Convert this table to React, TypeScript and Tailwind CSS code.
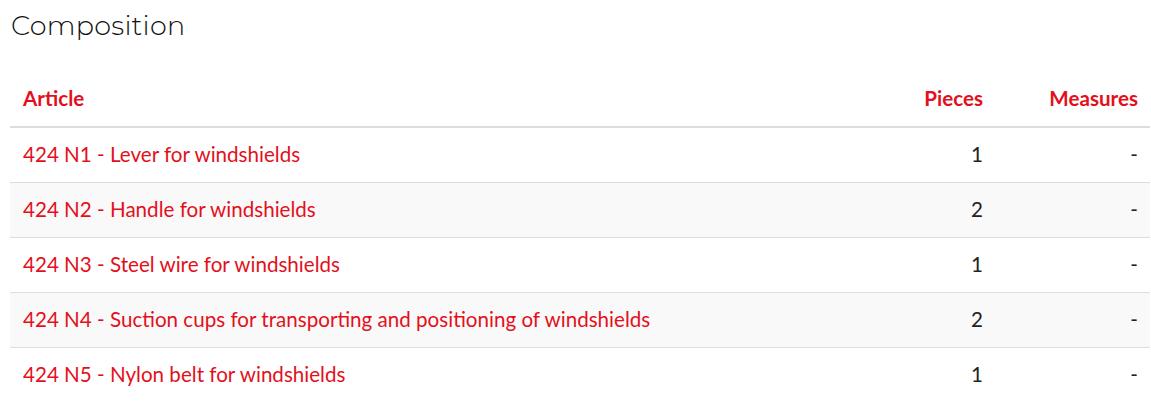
const rows = [
  { article: '424 N1 - Lever for windshields', pieces: '1', measures: '-' },
  { article: '424 N2 - Handle for windshields', pieces: '2', measures: '-' },
  { article: '424 N3 - Steel wire for windshields', pieces: '1', measures: '-' },
  { article: '424 N4 - Suction cups for transporting and positioning of windshields', pieces: '2', measures: '-' },
  { article: '424 N5 - Nylon belt for windshields', pieces: '1', measures: '-' },
];

export default function App() {
  return (
    <div className="bg-white pl-[10px] pr-px pt-[9px] font-['Lato',sans-serif]">
      <h2 className="pl-px text-[27px] leading-[34px] text-[#111] font-['Montserrat','Open_Sans',sans-serif] font-light tracking-[0.3px]">
        Composition
      </h2>

      <table className="mt-[28px] w-full border-collapse text-[20.6px] text-[#e3101c]">
        <thead>
          <tr className="border-b-2 border-[#dddddd]">
            <th className="h-[56px] px-[13px] text-left font-bold">Article</th>
            <th className="w-[120px] px-[12px] text-right font-bold">Pieces</th>
            <th className="w-[155px] px-[12px] text-right font-bold">Measures</th>
          </tr>
        </thead>
        <tbody>
          {rows.map((r, i) => (
            <tr
              key={r.article}
              className={`border-t border-[#dddddd] first:border-t-0 ${i % 2 === 1 ? 'bg-[#f9f9f9]' : 'bg-white'}`}
            >
              <td className="h-[55px] px-[13px]">{r.article}</td>
              <td className="px-[12px] text-right text-[#222]">{r.pieces}</td>
              <td className="px-[12px] text-right text-[#222]">{r.measures}</td>
            </tr>
          ))}
        </tbody>
      </table>
    </div>
  );
}
